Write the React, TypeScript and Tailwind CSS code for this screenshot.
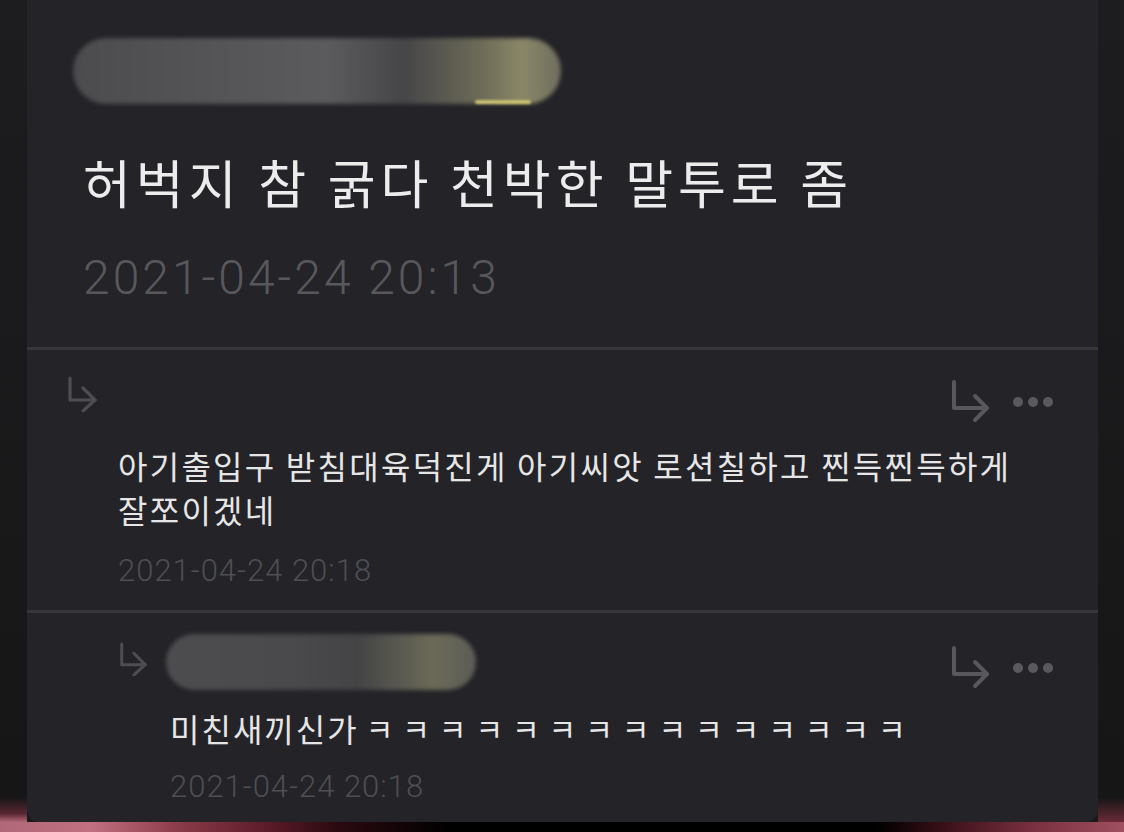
import React from "react";

const KR = { fontFamily: '"Noto Sans CJK KR", "Noto Sans", sans-serif' };
const NUM = { fontFamily: 'Roboto, "Noto Sans", sans-serif' };

function BigReply() {
  return (
    <svg width="42" height="46" viewBox="0 0 42 46" fill="none" stroke="#58585c" strokeWidth="4" strokeLinecap="round" strokeLinejoin="round">
      <path d="M4 3 V29 H37" />
      <path d="M25 17 L37 29 L25 41" />
    </svg>
  );
}

function Dots() {
  return (
    <div className="flex items-center gap-[5px]">
      <span className="block w-[10px] h-[10px] rounded-full bg-[#5a5a5e]" />
      <span className="block w-[10px] h-[10px] rounded-full bg-[#5a5a5e]" />
      <span className="block w-[10px] h-[10px] rounded-full bg-[#5a5a5e]" />
    </div>
  );
}

function SmallReply({ w, h }: { w: number; h: number }) {
  return (
    <svg width={w} height={h} viewBox="0 0 33 36" fill="none" stroke="#4e4e52" strokeWidth="3.2" strokeLinecap="round" strokeLinejoin="round">
      <path d="M5 2 V24 H30" />
      <path d="M18 12 L30 24 L18 35" />
    </svg>
  );
}

const KK = Array.from({ length: 15 }, () => "ㅋ");

export default function App() {
  return (
    <div className="w-[1124px] h-[832px] bg-black flex flex-col overflow-hidden">
      <div className="h-[822px] flex bg-[#1a1a1c]">
        <div className="w-[27px] shrink-0 bg-[linear-gradient(180deg,#1d1d1f_0%,#161617_97%,#5a2632_99%,#b06878_100%)]" />
        <div className="flex-1 bg-[#232328] rounded-b-[12px] flex flex-col">
          {/* Post header */}
          <div className="h-[347px] shrink-0 pl-[46px] pt-[38px] flex flex-col">
            <div className="relative w-[488px] h-[66px]">
              <div className="absolute inset-0 rounded-full blur-[2px] bg-[linear-gradient(90deg,#4c4c4e_0%,#555557_30%,#5b5b5d_52%,#464648_68%,#6e6c58_84%,#8a8768_92%,#6f6d5e_100%)]" />
              <div className="absolute right-[30px] bottom-[0px] w-[56px] h-[4px] rounded-full bg-[#c9c070] blur-[1px]" />
            </div>
            <div className="mt-[48px] pl-[10px] text-[52px] leading-[60px] text-[#ececec] tracking-[5px] font-normal" style={KR}>
              허벅지 참 굵다 천박한 말투로 좀
            </div>
            <div className="mt-[38px] pl-[10px] text-[48px] leading-[56px] text-[#58585c] tracking-[3px] font-light" style={NUM}>
              2021-04-24 20:13
            </div>
          </div>
          <div className="h-[3px] shrink-0 bg-[#36363b]" />

          {/* Comment 1 */}
          <div className="h-[260px] shrink-0 pl-[38px] pr-[45px] pt-[26px] flex flex-col">
            <div className="flex items-start justify-between">
              <SmallReply w={33} h={36} />
              <div className="mt-[3px] flex items-center gap-[21px]">
                <BigReply />
                <Dots />
              </div>
            </div>
            <div className="mt-[18px] pl-[53px] text-[32px] leading-[44px] text-[#e6e6e6] tracking-[2.25px]" style={KR}>
              아기출입구 받침대육덕진게 아기씨앗 로션칠하고 찐득찐득하게
              <br />
              잘쪼이겠네
            </div>
            <div className="mt-[22px] pl-[53px] text-[31px] leading-[36px] text-[#4e4e53] tracking-[1px] font-light" style={NUM}>
              2021-04-24 20:18
            </div>
          </div>
          <div className="h-[3px] shrink-0 bg-[#36363b]" />

          {/* Comment 2 */}
          <div className="flex-1 pl-[90px] pr-[45px] pt-[21px] flex flex-col">
            <div className="flex items-start justify-between">
              <div className="flex items-start gap-[18px]">
                <div className="mt-[8px]">
                  <SmallReply w={31} h={34} />
                </div>
                <div className="relative w-[310px] h-[56px]">
                  <div className="absolute inset-0 rounded-full blur-[2px] bg-[linear-gradient(90deg,#4d4d4f_0%,#4a4a4c_40%,#444446_62%,#5e5d52_78%,#6b6a58_86%,#5d5c56_100%)]" />
                </div>
              </div>
              <div className="mt-[11px] flex items-center gap-[21px]">
                <BigReply />
                <Dots />
              </div>
            </div>
            <div className="mt-[15px] pl-[53px] text-[32px] leading-[44px] text-[#e6e6e6] flex items-center" style={KR}>
              <span className="tracking-[2px]">미친새끼신가</span>
              <span className="ml-[7px] flex gap-[20.6px] text-[30px]">
                {KK.map((k, i) => (
                  <span key={i} className="block w-[16px] overflow-visible">{k}</span>
                ))}
              </span>
            </div>
            <div className="mt-[19px] pl-[53px] text-[31px] leading-[36px] text-[#4e4e53] tracking-[1px] font-light" style={NUM}>
              2021-04-24 20:18
            </div>
          </div>
        </div>
        <div className="w-[26px] shrink-0 bg-[linear-gradient(180deg,#1d1d1f_0%,#161617_97%,#6a2a36_100%)]" />
      </div>
      <div className="h-[10px] bg-[linear-gradient(90deg,#b06878_0%,#c07080_8%,#8a3a48_16%,#5a1a28_24%,#2a0a10_30%,#000_40%,#000_78%,#3a1018_84%,#7a3040_92%,#a05060_100%)]" />
    </div>
  );
}
